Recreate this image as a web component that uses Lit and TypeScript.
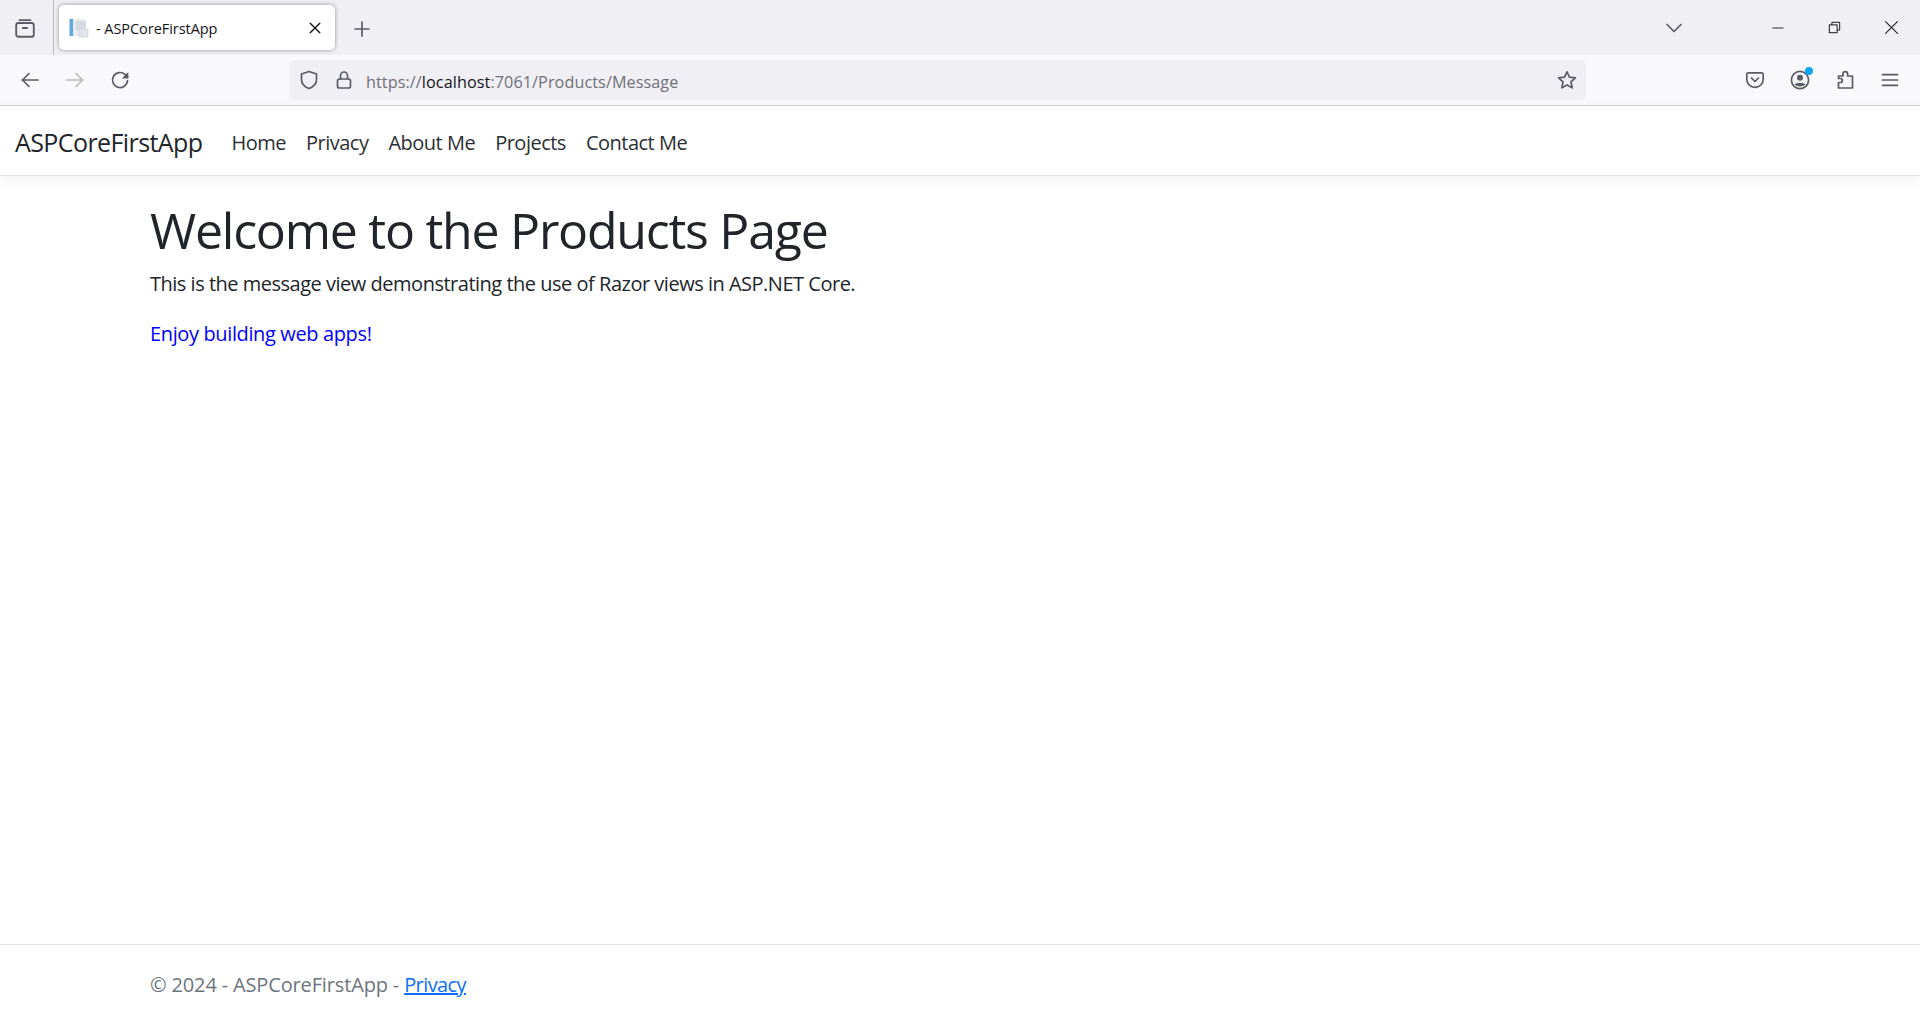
import { LitElement, html, css, svg } from "lit";
import { customElement } from "lit/decorators.js";

const ic = (body: unknown, size = 20, cls = "ic") => html`<svg class=${cls} width=${size} height=${size} viewBox="0 0 20 20" fill="none" stroke="currentColor" stroke-width="1.7" stroke-linecap="round" stroke-linejoin="round">${body}</svg>`;

@customElement("app-root")
export class AppRoot extends LitElement {
  static styles = css`
    :host { display: flex; flex-direction: column; height: 1020px; overflow: hidden; background: #fff; font-family: "Open Sans", "Noto Sans", sans-serif; color: #212529; }
    svg { display: block; flex: none; }
    .tabbar { height: 55px; flex: none; background: #f0f0f4; display: flex; align-items: flex-start; color: #5b5b66; }
    .views { width: 54px; height: 55px; flex: none; display: flex; align-items: center; justify-content: center; border-right: 1px solid #b8b8bf; box-sizing: border-box; padding-right: 4px; }
    .tab { margin: 5px 0 0 5px; width: 276px; height: 45px; box-sizing: border-box; background: #fff; border-radius: 5px; box-shadow: 0 0 4px rgba(0,0,0,.4); display: flex; align-items: center; padding: 0 12px 0 10px; color: #15141a; font-size: 14.5px; letter-spacing: -.05px; }
    .favicon { margin-right: 7px; }
    .title { flex: 1; white-space: nowrap; padding-top: 1px; }
    .x { color: #15141a; }
    .plus { margin: 19px 0 0 17px; }
    .right { margin-left: auto; display: flex; align-items: center; height: 55px; color: #15141a; }
    .chev { color: #5b5b66; margin-right: 65px; }
    .win { width: 57px; display: flex; justify-content: center; }
    .toolbar { height: 50px; flex: none; background: #f9f9fb; border-bottom: 1px solid #cfcfd8; display: flex; align-items: center; color: #5b5b66; }
    .nav-left { width: 289px; flex: none; display: flex; align-items: center; padding-left: 20px; gap: 25px; box-sizing: border-box; }
    .dim { color: #b9b9be; }
    .url { width: 1297px; height: 40px; flex: none; background: #f0f0f4; border-radius: 5px; display: flex; align-items: center; padding: 0 9px 0 10px; box-sizing: border-box; gap: 15px; }
    .urltext { flex: 1; font-size: 16.2px; letter-spacing: .08px; color: #6f6f78; margin-left: -3px; padding-top: 3px; white-space: nowrap; }
    .urltext b { font-weight: 400; color: #15141a; }
    .tools { flex: 1; display: flex; align-items: center; padding-left: 159px; gap: 25px; }
    .acct { position: relative; display: flex; }
    .dot { position: absolute; top: -3px; right: -3px; width: 8px; height: 8px; border-radius: 50%; background: #0ea5f5; }
    .navbar { height: 70px; flex: none; box-sizing: border-box; border-bottom: 1px solid #dee2e6; box-shadow: 0 5px 15px rgba(0,0,0,.05); display: flex; align-items: center; padding: 4px 15px 0; white-space: nowrap; }
    .brand { font-size: 25px; letter-spacing: -.59px; margin-right: 29px; line-height: 1; }
    .links { display: flex; gap: 20px; font-size: 20px; letter-spacing: -.5px; color: #2b2f33; }
    main { flex: 1; padding: 24px 150px 0; }
    h1 { margin: 0 0 9px; font-size: 50px; font-weight: 400; line-height: 60px; letter-spacing: -1.24px; }
    p { margin: 0 0 20px; font-size: 20px; line-height: 30px; letter-spacing: -.49px; }
    p.blue { color: #0000ff; letter-spacing: -.37px; }
    footer { height: 60px; flex: none; border-top: 1px solid #dee2e6; padding: 9px 150px 6px; display: flex; align-items: center; font-size: 20px; letter-spacing: -.15px; color: #6c757d; white-space: pre; }
    footer a { color: #0d6efd; text-decoration: underline; letter-spacing: -.6px; }
  `;

  render() {
    return html`
      <div class="tabbar">
        <div class="views">${ic(svg`<path d="M5 2.800h10"/><rect x="2" y="5.500" width="16" height="12.500" rx="2.200"/><path d="M8 10h4"/>`, 22)}</div>
        <div class="tab">
          <svg class="favicon" width="20" height="20" viewBox="0 0 20 20"><rect x="0.500" y="1" width="3.500" height="17" fill="#5fa8e0"/><rect x="4" y="1" width="12" height="17" fill="#e8ecf0"/><rect x="7" y="3" width="10" height="9" fill="#d5dbe1"/><rect x="10" y="11" width="9" height="8" fill="#e2e6ea" stroke="#c5ccd3" stroke-width=".6"/></svg>
          <span class="title">- ASPCoreFirstApp</span>
          ${ic(svg`<path d="M4 4l12 12M16 4L4 16"/>`, 16, "x")}
        </div>
        ${ic(svg`<path d="M10 3v14M3 10h14"/>`, 20, "plus")}
        <div class="right">
          <span class="chev">${ic(svg`<path d="M3 6.500l7 7 7-7"/>`, 20)}</span>
          <span class="win">${ic(svg`<path d="M2 10h16" stroke-width="1.300" stroke-linecap="butt"/>`, 14)}</span>
          <span class="win">${ic(svg`<rect x="2" y="6" width="12" height="12" stroke-width="1.500" stroke-linejoin="miter"/><path d="M6 6V2h12v12h-4" stroke-width="1.500" stroke-linejoin="miter" stroke-linecap="butt"/>`, 13)}</span>
          <span class="win">${ic(svg`<path d="M3 3l14 14M17 3L3 17" stroke-width="1.200"/>`, 17)}</span>
        </div>
      </div>
      <div class="toolbar">
        <div class="nav-left">
          ${ic(svg`<path d="M18 10H2M9 3.500L2.500 10 9 16.500"/>`)}
          <span class="dim">${ic(svg`<path d="M2 10h16M11 3.500l6.500 6.500-6.500 6.500"/>`)}</span>
          ${ic(svg`<path d="M17.500 10.500a7.500 7.500 0 1 1-2.300-5.900L17.800 7"/><path d="M18.300 2v6.500h-6.500z" fill="currentColor" stroke="none"/>`)}
        </div>
        <div class="url">
          ${ic(svg`<path d="M10 1.500l7.500 2.500v6c0 4-3.200 6.800-7.500 8.500-4.300-1.700-7.500-4.500-7.500-8.500V4z"/>`)}
          ${ic(svg`<rect x="3.500" y="9" width="13" height="9" rx="2"/><path d="M6.500 9V5.500a3.500 3.500 0 0 1 7 0V9"/>`)}
          <span class="urltext">https://<b>localhost</b>:7061/Products/Message</span>
          ${ic(svg`<path d="M10 1.800l2.500 5.400 5.900.7-4.400 4 1.200 5.900L10 14.900l-5.200 2.900L6 11.900l-4.400-4 5.900-.7z"/>`)}
        </div>
        <div class="tools">
          ${ic(svg`<path d="M3.500 2.800h13a1.700 1.700 0 0 1 1.700 1.700v4.700a8.200 8.200 0 0 1-16.400 0V4.500a1.700 1.700 0 0 1 1.700-1.700z"/><path d="M6.500 8l3.500 3.500L13.500 8"/>`)}
          <span class="acct">${ic(svg`<circle cx="10" cy="10" r="8.600"/><circle cx="10" cy="7.800" r="3" fill="currentColor" stroke="none"/><path d="M4.500 14.300c1.500-1.800 9.500-1.800 11 0-3 3-8 3-11 0z" fill="currentColor" stroke="none"/>`)}<span class="dot"></span></span>
          ${ic(svg`<path d="M3.500 18v-5.500h1.800a2 2 0 0 0 0-4H3.500V6h4.500V4a2.300 2.300 0 0 1 4.600 0v2H17.500v12z"/>`)}
          ${ic(svg`<path d="M2.500 4.700h15M2.500 10h15M2.500 15.300h15"/>`)}
        </div>
      </div>
      <div class="navbar">
        <span class="brand">ASPCoreFirstApp</span>
        <div class="links"><span>Home</span><span>Privacy</span><span>About Me</span><span>Projects</span><span>Contact Me</span></div>
      </div>
      <main>
        <h1>Welcome to the Products Page</h1>
        <p>This is the message view demonstrating the use of Razor views in ASP.NET Core.</p>
        <p class="blue">Enjoy building web apps!</p>
      </main>
      <footer>© 2024 - ASPCoreFirstApp - <a>Privacy</a></footer>
    `;
  }
}
